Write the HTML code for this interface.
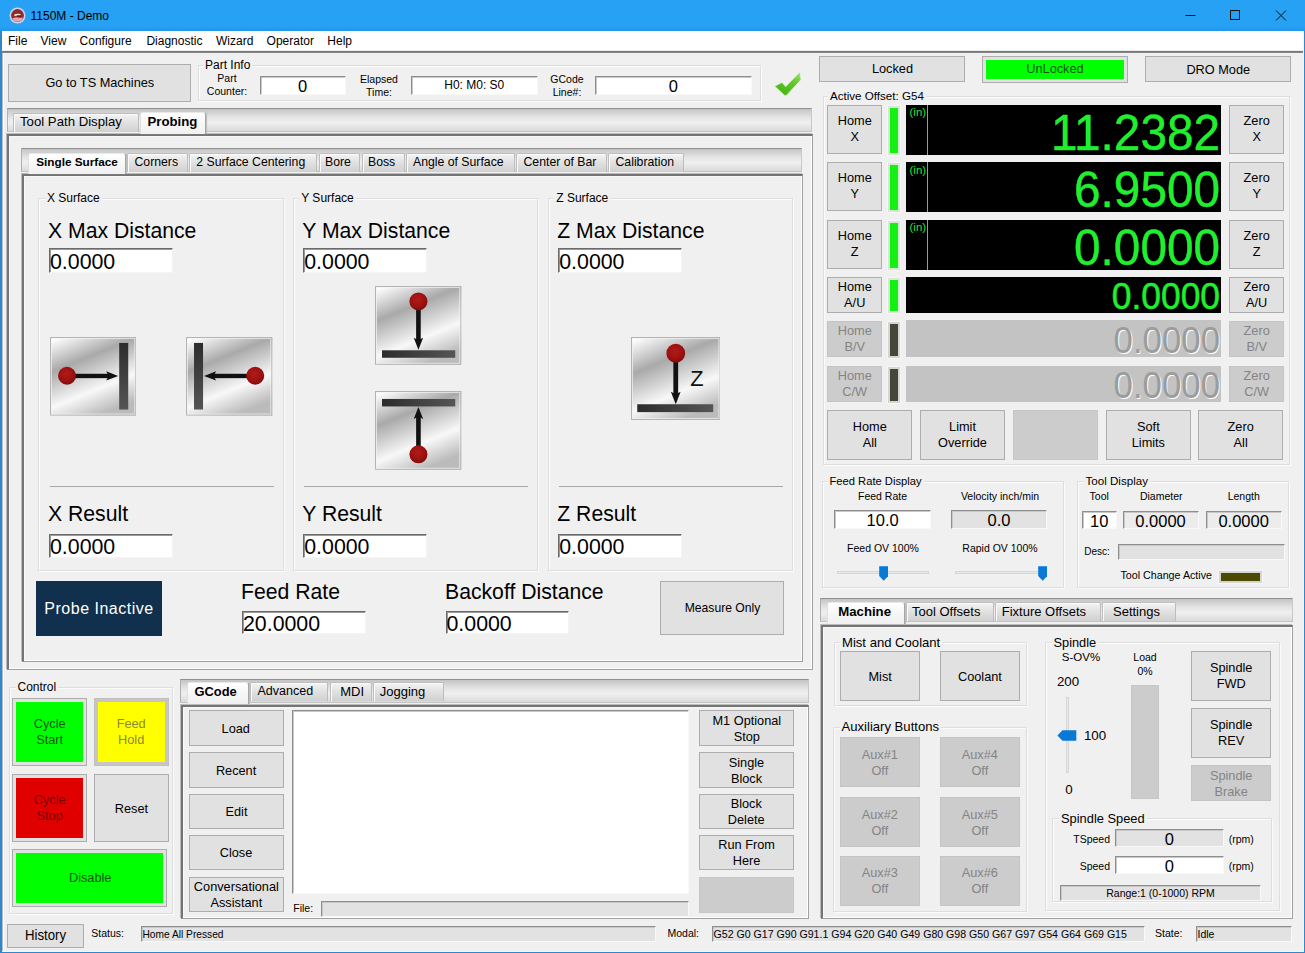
<!DOCTYPE html>
<html><head><meta charset="utf-8"><title>1150M - Demo</title><style>
html,body{margin:0;padding:0}
body{width:1305px;height:953px;overflow:hidden;position:relative;background:#f0f0f0;font-family:"Liberation Sans",sans-serif;color:#000}
.a{position:absolute;box-sizing:border-box}
.t{white-space:nowrap}
.btn{background:#e1e1e1;border:1px solid #adadad;display:flex;align-items:center;justify-content:center;text-align:center;font-size:13.3px;line-height:16px;padding-top:1px}
.btn span{display:inline-block;transform:scaleX(.958)}
.btn.np{padding-top:0}
.btn.dis{background:#cccccc;border-color:#c4c4c4;color:#848484}
.blank{background:#cccccc;border:1px solid #c6c6c6}
.cb{padding:3px;background:#e1e1e1}
.cb .ci{width:100%;height:100%;display:flex;align-items:center;justify-content:center;text-align:center}
.cb.fh{background:#c6c6c6;border-color:#c0c0c0}
.grp{border:1px solid #dedede;box-shadow:1px 1px 0 #fbfbfb, inset 1px 1px 0 #fbfbfb}
.gl{background:#f0f0f0;padding:0 2px;white-space:nowrap}
.inp{background:#fff;border:1px solid;border-color:#8e8e8e #f8f8f8 #f8f8f8 #8e8e8e;box-shadow:inset 1px 1px 0 #c8c8c8;white-space:nowrap;overflow:hidden;display:flex;align-items:center}
.inp.c{justify-content:center}
.inp.gray{background:#e2e2e2}
.inp.lite{background:#ececec}
.inp.st{font-size:10.5px;padding-left:1px}
.inp.n17{font-size:16.5px;padding-top:2.5px}
.inp.big{font-size:21.33px;padding-left:0;padding-top:4px;border-color:#6a6a6a #f4f4f4 #f4f4f4 #6a6a6a;box-shadow:inset 1px 1px 0 #9a9a9a}
.strip{background:linear-gradient(#c4c4c4 0%,#e2e2e2 35%,#f0f0f0 62%,#dadada 100%);border:1px solid #c8c8c8;border-top-color:#8f8f8f;border-left-color:#b0b0b0;border-bottom-color:#c4c4c4}
.panel{border:solid;border-width:2px 1px 1px 2px;border-color:#747474 #a0a0a0 #a0a0a0 #747474;background:#f0f0f0;box-shadow:-1px -1px 0 #bcbcbc, inset -1px -1px 0 #fff, inset 1px 1px 0 #f8f8f8}
.tab{background:linear-gradient(#f4f4f4,#e2e2e2 45%,#d0d0d0);border:1px solid #bdbdbd;border-bottom:none;box-shadow:inset 1px 1px 0 #fbfbfb;display:block;line-height:15.6px;white-space:nowrap;border-radius:2px 2px 0 0}
.tab.sel{background:linear-gradient(#ffffff,#f7f7f7 50%,#f0f0f0);font-weight:bold;border-color:#e8e8e8 #a6a6a6 #f0f0f0 #e0e0e0;box-shadow:1px 0 1px #bbb;border-radius:3px 3px 0 0}
.probe{background:#10304e;color:#fff;font-size:16px;display:flex;align-items:center;justify-content:center;letter-spacing:.5px;padding-top:2px}
.drot{transform:scaleX(.962);transform-origin:100% 50%}
.led{border:1px solid #d8d8d8;box-shadow:0 0 0 1px #f6f6f6}
.led.on{background:#14f014;border:2px solid #d4e8d4}
.led.off{background:#474739;border:2px solid #d6d6d0}
.dro{background:#000}
.drooff{background:#c3c3c3}
.track{background:#e7eaea;border:1px solid #d6d6d6}
</style></head><body>
<div class="a " style="left:0px;top:0px;width:1305px;height:953px;background:#2f87cf;"></div>
<div class="a " style="left:2px;top:31px;width:1302px;height:921px;background:#f0f0f0;"></div>
<div class="a " style="left:2px;top:53px;width:1px;height:898px;background:#b4bcc4;"></div>
<div class="a " style="left:3px;top:53px;width:1px;height:898px;background:#fafafa;"></div>
<div class="a " style="left:1303px;top:31px;width:1px;height:921px;background:#ecfbff;"></div>
<div class="a " style="left:2px;top:951px;width:1302px;height:1px;background:#ecfbff;"></div>
<div class="a " style="left:0px;top:0px;width:1305px;height:31px;background:linear-gradient(#27a1f4 0,#27a1f4 84%,#2295ea 100%);"></div>
<svg class="a" style="left:8.5px;top:6.7px" width="17" height="17" viewBox="0 0 17 17"><circle cx="8.5" cy="8.5" r="8" fill="#cdd3ea"/><circle cx="8.5" cy="8.5" r="6.4" fill="#8c2c2c"/><path d="M3 11.5 Q8.5 9.5 14 10.8 Q12.5 14.6 8.5 14.8 Q4.5 14.6 3 11.5Z" fill="#e3a6ae"/><path d="M5.2 7.6 Q8 6.2 11.6 7 L11.4 8.6 Q8.4 8 5.6 9.2Z" fill="#f3e4dc"/><path d="M7.6 8.6 L11.2 8.2 L12.6 10.6 L9 10.4Z" fill="#6e1c1c"/></svg>
<div class="a t " style="left:30.5px;top:8.5px;width:300px;height:14px;line-height:14px;font-size:12px;text-align:left;color:#000;">1150M - Demo</div>
<svg class="a" style="left:1170px;top:0" width="135" height="31" viewBox="0 0 135 31"><g stroke="#111" stroke-width="1" fill="none"><path d="M15.5 15.5h10"/><rect x="60.5" y="10.5" width="9" height="9"/><path d="M106 10.5l10 10M116 10.5l-10 10"/></g></svg>
<div class="a " style="left:2px;top:31px;width:1301px;height:20px;background:#fff;"></div>
<div class="a t " style="left:8px;top:33.5px;width:300px;height:14px;line-height:14px;font-size:12px;text-align:left;">File</div>
<div class="a t " style="left:40.5px;top:33.5px;width:300px;height:14px;line-height:14px;font-size:12px;text-align:left;">View</div>
<div class="a t " style="left:79.6px;top:33.5px;width:300px;height:14px;line-height:14px;font-size:12px;text-align:left;">Configure</div>
<div class="a t " style="left:146.4px;top:33.5px;width:300px;height:14px;line-height:14px;font-size:12px;text-align:left;">Diagnostic</div>
<div class="a t " style="left:216px;top:33.5px;width:300px;height:14px;line-height:14px;font-size:12px;text-align:left;">Wizard</div>
<div class="a t " style="left:266.6px;top:33.5px;width:300px;height:14px;line-height:14px;font-size:12px;text-align:left;">Operator</div>
<div class="a t " style="left:327.3px;top:33.5px;width:300px;height:14px;line-height:14px;font-size:12px;text-align:left;">Help</div>
<div class="a " style="left:2px;top:50px;width:1301px;height:1px;background:#efefef;"></div>
<div class="a " style="left:2px;top:51px;width:1300.5px;height:2px;background:linear-gradient(#6c6c6c,#8f8f8f);"></div>
<div class="a btn " style="left:8px;top:63.6px;width:183px;height:38px;"><span>Go to TS Machines</span></div>
<div class="a grp " style="left:197.5px;top:65px;width:563.5px;height:35.5px;"></div>
<div class="a t gl" style="left:203px;top:58px;height:14px;line-height:14px;font-size:12px;">Part Info</div>
<div class="a t " style="left:197px;top:72.25px;width:60px;height:13px;line-height:13px;font-size:10.5px;text-align:center;">Part</div>
<div class="a t " style="left:197px;top:85.25px;width:60px;height:13px;line-height:13px;font-size:10.5px;text-align:center;">Counter:</div>
<div class="a inp c n17" style="left:259.5px;top:76px;width:86px;height:18.5px;">0</div>
<div class="a t " style="left:349px;top:72.5px;width:60px;height:13px;line-height:13px;font-size:10.5px;text-align:center;">Elapsed</div>
<div class="a t " style="left:349px;top:85.5px;width:60px;height:13px;line-height:13px;font-size:10.5px;text-align:center;">Time:</div>
<div class="a inp c" style="left:410.5px;top:76px;width:127.5px;height:18.5px;font-size:12px;">H0: M0: S0</div>
<div class="a t " style="left:537px;top:72.5px;width:60px;height:13px;line-height:13px;font-size:10.5px;text-align:center;">GCode</div>
<div class="a t " style="left:537px;top:85.5px;width:60px;height:13px;line-height:13px;font-size:10.5px;text-align:center;">Line#:</div>
<div class="a inp c n17" style="left:594.75px;top:76px;width:157.25px;height:18.5px;">0</div>
<svg class="a" style="left:770px;top:68px" width="36" height="32" viewBox="0 0 36 32"><defs><linearGradient id="ck" x1="0.9" y1="0" x2="0.3" y2="1"><stop offset="0" stop-color="#9be069"/><stop offset="0.45" stop-color="#62c42c"/><stop offset="1" stop-color="#4ab415"/></linearGradient></defs><path d="M4.7 18.2 L11.9 14.4 L15.8 18.6 L29.8 4 L31 11.8 L16.4 27.4 L14.6 27.4 Z" fill="url(#ck)" stroke="#dff3cf" stroke-width="0.8" stroke-linejoin="round"/></svg>
<div class="a strip" style="left:7px;top:108px;width:805px;height:24px;"></div>
<div class="a panel" style="left:7px;top:134px;width:805.5px;height:536px;"></div>
<div class="a tab " style="left:12.5px;top:112.5px;width:126px;height:19px;font-size:13.2px;padding-left:6.5px;padding-top:0px;"><span>Tool Path Display</span></div>
<div class="a tab sel" style="left:140px;top:112px;width:65.5px;height:21.5px;font-size:13.2px;padding-left:6.5px;padding-top:1px;"><span>Probing</span></div>
<div class="a strip" style="left:21px;top:148px;width:781px;height:24px;"></div>
<div class="a panel" style="left:22px;top:174px;width:781px;height:488px;"></div>
<div class="a tab sel" style="left:28px;top:153px;width:98px;height:20.5px;font-size:11.75px;padding-left:7.25px;padding-top:0px;"><span>Single Surface</span></div>
<div class="a tab " style="left:127px;top:153px;width:60.5px;height:18.5px;font-size:12.25px;padding-left:6.5px;padding-top:1px;"><span>Corners</span></div>
<div class="a tab " style="left:189px;top:153px;width:128px;height:18.5px;font-size:12.25px;padding-left:6.25px;padding-top:1px;"><span>2 Surface Centering</span></div>
<div class="a tab " style="left:318.5px;top:153px;width:41.5px;height:18.5px;font-size:12.25px;padding-left:5.5px;padding-top:1px;"><span>Bore</span></div>
<div class="a tab " style="left:361.5px;top:153px;width:43.5px;height:18.5px;font-size:12.25px;padding-left:5.5px;padding-top:1px;"><span>Boss</span></div>
<div class="a tab " style="left:406px;top:153px;width:109px;height:18.5px;font-size:12.25px;padding-left:6px;padding-top:1px;"><span>Angle of Surface</span></div>
<div class="a tab " style="left:516px;top:153px;width:90.5px;height:18.5px;font-size:12.25px;padding-left:6.5px;padding-top:1px;"><span>Center of Bar</span></div>
<div class="a tab " style="left:608px;top:153px;width:76px;height:18.5px;font-size:12.25px;padding-left:6.5px;padding-top:1px;"><span>Calibration</span></div>
<div class="a grp " style="left:38.25px;top:198px;width:245.75px;height:372.5px;"></div>
<div class="a t gl" style="left:45px;top:191px;height:14px;line-height:14px;font-size:12px;">X Surface</div>
<div class="a t " style="left:48px;top:217.55px;width:300px;height:25px;line-height:25px;font-size:21.2px;text-align:left;">X Max Distance</div>
<div class="a inp big" style="left:49px;top:248.4px;width:123.5px;height:24.2px;">0.0000</div>
<div class="a " style="left:50px;top:486px;width:223.75px;height:1px;background:#a8a8a8;"></div>
<div class="a t " style="left:48px;top:500.95px;width:300px;height:25px;line-height:25px;font-size:21.2px;text-align:left;">X Result</div>
<div class="a inp big" style="left:49px;top:533.6px;width:123.5px;height:24px;">0.0000</div>
<div class="a grp " style="left:292.5px;top:198px;width:245.75px;height:372.5px;"></div>
<div class="a t gl" style="left:299.25px;top:191px;height:14px;line-height:14px;font-size:12px;">Y Surface</div>
<div class="a t " style="left:302.25px;top:217.55px;width:300px;height:25px;line-height:25px;font-size:21.2px;text-align:left;">Y Max Distance</div>
<div class="a inp big" style="left:303.25px;top:248.4px;width:123.5px;height:24.2px;">0.0000</div>
<div class="a " style="left:304.25px;top:486px;width:223.75px;height:1px;background:#a8a8a8;"></div>
<div class="a t " style="left:302.25px;top:500.95px;width:300px;height:25px;line-height:25px;font-size:21.2px;text-align:left;">Y Result</div>
<div class="a inp big" style="left:303.25px;top:533.6px;width:123.5px;height:24px;">0.0000</div>
<div class="a grp " style="left:547.5px;top:198px;width:245.75px;height:372.5px;"></div>
<div class="a t gl" style="left:554.25px;top:191px;height:14px;line-height:14px;font-size:12px;">Z Surface</div>
<div class="a t " style="left:557.25px;top:217.55px;width:300px;height:25px;line-height:25px;font-size:21.2px;text-align:left;">Z Max Distance</div>
<div class="a inp big" style="left:558.25px;top:248.4px;width:123.5px;height:24.2px;">0.0000</div>
<div class="a " style="left:559.25px;top:486px;width:223.75px;height:1px;background:#a8a8a8;"></div>
<div class="a t " style="left:557.25px;top:500.95px;width:300px;height:25px;line-height:25px;font-size:21.2px;text-align:left;">Z Result</div>
<div class="a inp big" style="left:558.25px;top:533.6px;width:123.5px;height:24px;">0.0000</div>
<svg class="a" width="0" height="0" style="left:0;top:0"><defs><linearGradient id="metal" x1="0.1" y1="0" x2="0.55" y2="1"><stop offset="0" stop-color="#ffffff"/><stop offset="0.34" stop-color="#a9a9a9"/><stop offset="0.72" stop-color="#f8f8f8"/><stop offset="1" stop-color="#bbbbbb"/></linearGradient><linearGradient id="barv" x1="0" y1="0" x2="0" y2="1"><stop offset="0" stop-color="#2c2c2c"/><stop offset="1" stop-color="#555"/></linearGradient><linearGradient id="barh" x1="0" y1="0" x2="1" y2="0"><stop offset="0" stop-color="#2c2c2c"/><stop offset="1" stop-color="#555"/></linearGradient><radialGradient id="ball" cx="0.45" cy="0.4" r="0.6"><stop offset="0" stop-color="#b01c18"/><stop offset="0.7" stop-color="#9c1010"/><stop offset="1" stop-color="#7c0c0c"/></radialGradient></defs></svg>
<svg class="a" style="left:50px;top:337.25px" width="86.25" height="78.5" viewBox="0 0 86 79" preserveAspectRatio="none"><rect x="0" y="0" width="86" height="79" fill="url(#metal)"/><rect x="0.5" y="0.5" width="85" height="78" fill="none" stroke="#b4b4b4"/><rect x="1.5" y="1.5" width="83" height="76" fill="none" stroke="#f4f4f4" stroke-opacity=".7"/><rect x="69" y="6" width="9" height="67" fill="url(#barv)"/><rect x="22" y="37" width="38" height="4.4" fill="#111"/><path d="M56 34.5 L68 39.2 L56 43.9 L58.5 39.2Z" fill="#111"/><circle cx="17" cy="39" r="9" fill="url(#ball)"/></svg>
<svg class="a" style="left:186.25px;top:337.25px" width="86.25" height="78.5" viewBox="0 0 86 79" preserveAspectRatio="none"><rect x="0" y="0" width="86" height="79" fill="url(#metal)"/><rect x="0.5" y="0.5" width="85" height="78" fill="none" stroke="#b4b4b4"/><rect x="1.5" y="1.5" width="83" height="76" fill="none" stroke="#f4f4f4" stroke-opacity=".7"/><rect x="8" y="6" width="9" height="67" fill="url(#barv)"/><rect x="26" y="37" width="38" height="4.4" fill="#111"/><path d="M30 34.5 L18 39.2 L30 43.9 L27.5 39.2Z" fill="#111"/><circle cx="69" cy="39" r="9" fill="url(#ball)"/></svg>
<svg class="a" style="left:375.25px;top:286px" width="86.25" height="78.75" viewBox="0 0 86 79" preserveAspectRatio="none"><rect x="0" y="0" width="86" height="79" fill="url(#metal)"/><rect x="0.5" y="0.5" width="85" height="78" fill="none" stroke="#b4b4b4"/><rect x="1.5" y="1.5" width="83" height="76" fill="none" stroke="#f4f4f4" stroke-opacity=".7"/><rect x="7" y="64.5" width="73" height="7.5" fill="url(#barh)"/><rect x="41" y="20" width="4.6" height="36" fill="#111"/><path d="M38.6 52 L43.3 64 L48 52 L43.3 54.5Z" fill="#111"/><circle cx="43.3" cy="15.5" r="9" fill="url(#ball)"/></svg>
<svg class="a" style="left:375.25px;top:391.25px" width="86.25" height="78.75" viewBox="0 0 86 79" preserveAspectRatio="none"><rect x="0" y="0" width="86" height="79" fill="url(#metal)"/><rect x="0.5" y="0.5" width="85" height="78" fill="none" stroke="#b4b4b4"/><rect x="1.5" y="1.5" width="83" height="76" fill="none" stroke="#f4f4f4" stroke-opacity=".7"/><rect x="7" y="8" width="73" height="7.5" fill="url(#barh)"/><rect x="41" y="24" width="4.6" height="36" fill="#111"/><path d="M38.6 28 L43.3 16 L48 28 L43.3 25.5Z" fill="#111"/><circle cx="43.3" cy="63.5" r="9" fill="url(#ball)"/></svg>
<svg class="a" style="left:630.5px;top:337px" width="89.5" height="83" viewBox="0 0 86 79" preserveAspectRatio="none"><rect x="0" y="0" width="86" height="79" fill="url(#metal)"/><rect x="0.5" y="0.5" width="85" height="78" fill="none" stroke="#b4b4b4"/><rect x="1.5" y="1.5" width="83" height="76" fill="none" stroke="#f4f4f4" stroke-opacity=".7"/><rect x="6" y="64" width="73" height="7.5" fill="url(#barh)"/><rect x="40.7" y="20" width="4.6" height="36" fill="#111"/><path d="M38.3 52 L43 64 L47.7 52 L43 54.5Z" fill="#111"/><circle cx="43" cy="15.5" r="9" fill="url(#ball)"/><text x="57" y="47" font-family="Liberation Sans, sans-serif" font-size="21" fill="#111">Z</text></svg>
<div class="a probe" style="left:36px;top:580.5px;width:126px;height:55.5px;"><span>Probe Inactive</span></div>
<div class="a t " style="left:241px;top:578.95px;width:300px;height:25px;line-height:25px;font-size:21.2px;text-align:left;">Feed Rate</div>
<div class="a inp big" style="left:242px;top:611px;width:123.5px;height:23px;">20.0000</div>
<div class="a t " style="left:445px;top:578.95px;width:300px;height:25px;line-height:25px;font-size:21.2px;text-align:left;">Backoff Distance</div>
<div class="a inp big" style="left:445.5px;top:611px;width:123.75px;height:23px;">0.0000</div>
<div class="a btn " style="left:660px;top:581px;width:124px;height:53.5px;font-size:12.7px;"><span>Measure Only</span></div>
<div class="a grp " style="left:8.75px;top:687px;width:163.75px;height:227px;"></div>
<div class="a t gl" style="left:15.5px;top:680px;height:14px;line-height:14px;font-size:12px;">Control</div>
<div class="a btn cb " style="left:12.4px;top:698px;width:74.6px;height:67.5px;"><div class="ci" style="background:#00ff00;color:#0a5a0a"><span>Cycle<br>Start</span></div></div>
<div class="a btn cb fh" style="left:94.25px;top:698px;width:74.25px;height:68px;"><div class="ci" style="background:#ffff00;color:#8a8a3a"><span>Feed<br>Hold</span></div></div>
<div class="a btn cb " style="left:12.4px;top:774px;width:74.6px;height:68px;"><div class="ci" style="background:#e00000;color:#7a0000"><span>Cycle<br>Stop</span></div></div>
<div class="a btn " style="left:94.25px;top:774px;width:74.25px;height:68px;"><span>Reset</span></div>
<div class="a btn cb " style="left:12.4px;top:849px;width:154.6px;height:58px;"><div class="ci" style="background:#00ff00;color:#0a5a0a"><span>Disable</span></div></div>
<div class="a strip" style="left:180px;top:679px;width:629px;height:23.5px;"></div>
<div class="a panel" style="left:181px;top:704.5px;width:627.5px;height:214.5px;"></div>
<div class="a tab sel" style="left:187px;top:682.4px;width:62.25px;height:21.6px;font-size:12.9px;padding-left:6.5px;padding-top:0.5px;"><span>GCode</span></div>
<div class="a tab " style="left:250px;top:682.4px;width:78px;height:19.1px;font-size:12.5px;padding-left:6.5px;padding-top:1px;"><span>Advanced</span></div>
<div class="a tab " style="left:329.5px;top:682.4px;width:42.5px;height:19.1px;font-size:13px;padding-left:9.75px;padding-top:1px;"><span>MDI</span></div>
<div class="a tab " style="left:373px;top:682.4px;width:70.5px;height:19.1px;font-size:13px;padding-left:5.75px;padding-top:1px;"><span>Jogging</span></div>
<div class="a btn " style="left:188.75px;top:710px;width:94.85px;height:36px;"><span>Load</span></div>
<div class="a btn " style="left:188.75px;top:752px;width:94.85px;height:36px;"><span>Recent</span></div>
<div class="a btn " style="left:188.75px;top:794px;width:94.85px;height:35px;"><span>Edit</span></div>
<div class="a btn " style="left:188.75px;top:835px;width:94.85px;height:35px;"><span>Close</span></div>
<div class="a btn " style="left:188.75px;top:877px;width:94.85px;height:35px;"><span>Conversational<br>Assistant</span></div>
<div class="a btn " style="left:699px;top:710px;width:94.75px;height:36px;"><span>M1 Optional<br>Stop</span></div>
<div class="a btn " style="left:699px;top:752px;width:94.75px;height:36px;"><span>Single<br>Block</span></div>
<div class="a btn " style="left:699px;top:794px;width:94.75px;height:35px;"><span>Block<br>Delete</span></div>
<div class="a btn " style="left:699px;top:835px;width:94.75px;height:35px;"><span>Run From<br>Here</span></div>
<div class="a blank" style="left:699px;top:876.5px;width:94.75px;height:36.5px;"></div>
<div class="a inp " style="left:292px;top:710px;width:396.5px;height:184px;background:#fff;"></div>
<div class="a t " style="left:293.25px;top:901.5px;width:300px;height:13px;line-height:13px;font-size:10.5px;text-align:left;">File:</div>
<div class="a inp gray" style="left:321.25px;top:900.75px;width:367.25px;height:15.75px;"></div>
<div class="a btn " style="left:7px;top:924.4px;width:76.5px;height:23.2px;font-size:13.8px;"><span>History</span></div>
<div class="a t " style="left:91.25px;top:927.25px;width:300px;height:13px;line-height:13px;font-size:10.5px;text-align:left;">Status:</div>
<div class="a inp gray st" style="left:140.5px;top:926px;width:515.5px;height:16.4px;font-size:10.2px;">Home All Pressed</div>
<div class="a t " style="left:667.5px;top:927.25px;width:300px;height:13px;line-height:13px;font-size:10.5px;text-align:left;">Modal:</div>
<div class="a inp gray st" style="left:711.5px;top:926px;width:433px;height:16.4px;font-size:10.6px;">G52 G0 G17 G90 G91.1 G94 G20 G40 G49 G80 G98 G50 G67 G97 G54 G64 G69 G15</div>
<div class="a t " style="left:1155px;top:927.25px;width:300px;height:13px;line-height:13px;font-size:10.5px;text-align:left;">State:</div>
<div class="a inp gray st" style="left:1195.5px;top:926px;width:96px;height:16.4px;">Idle</div>
<div class="a btn " style="left:819px;top:56px;width:146px;height:25.5px;"><span>Locked</span></div>
<div class="a btn cb" style="left:982px;top:56px;width:145.5px;height:26.5px;"><div class="ci" style="background:#00ff00;color:#0a5a0a;"><span>UnLocked</span></div></div>
<div class="a btn " style="left:1145px;top:56px;width:146px;height:26px;"><span>DRO Mode</span></div>
<div class="a grp " style="left:822.5px;top:95.5px;width:467.5px;height:369.5px;"></div>
<div class="a t gl" style="left:828px;top:88.5px;height:14px;line-height:14px;font-size:11.6px;">Active Offset: G54</div>
<div class="a btn np" style="left:827px;top:105px;width:55px;height:48.75px;"><span>Home<br>X</span></div>
<div class="a btn np" style="left:1229px;top:105px;width:55px;height:48.75px;"><span>Zero<br>X</span></div>
<div class="a led on" style="left:888px;top:106px;width:12px;height:48.5px;"></div>
<div class="a dro" style="left:906px;top:104.5px;width:314.6px;height:50.5px;"></div>
<div class="a " style="left:906px;top:104.5px;width:21.5px;height:50.5px;border-right:1px solid #9a9a9a;"></div>
<div class="a t " style="left:909.5px;top:105px;width:300px;height:14px;line-height:14px;font-size:11.5px;text-align:left;color:#1fe03a;">(in)</div>
<div class="a t drot" style="left:919.6px;top:103.21px;width:300px;height:60px;line-height:60px;font-size:49.6px;text-align:right;color:#1ff02e;-webkit-text-stroke:0.5px #1ff02e;">11.2382</div>
<div class="a btn np" style="left:827px;top:162px;width:55px;height:48.75px;"><span>Home<br>Y</span></div>
<div class="a btn np" style="left:1229px;top:162px;width:55px;height:48.75px;"><span>Zero<br>Y</span></div>
<div class="a led on" style="left:888px;top:163px;width:12px;height:48.5px;"></div>
<div class="a dro" style="left:906px;top:162px;width:314.6px;height:50px;"></div>
<div class="a " style="left:906px;top:162px;width:21.5px;height:50px;border-right:1px solid #9a9a9a;"></div>
<div class="a t " style="left:909.5px;top:162.5px;width:300px;height:14px;line-height:14px;font-size:11.5px;text-align:left;color:#1fe03a;">(in)</div>
<div class="a t drot" style="left:919.6px;top:160.21px;width:300px;height:60px;line-height:60px;font-size:49.6px;text-align:right;color:#1ff02e;-webkit-text-stroke:0.5px #1ff02e;">6.9500</div>
<div class="a btn np" style="left:827px;top:220px;width:55px;height:48.75px;"><span>Home<br>Z</span></div>
<div class="a btn np" style="left:1229px;top:220px;width:55px;height:48.75px;"><span>Zero<br>Z</span></div>
<div class="a led on" style="left:888px;top:221px;width:12px;height:48.5px;"></div>
<div class="a dro" style="left:906px;top:219.5px;width:314.6px;height:50px;"></div>
<div class="a " style="left:906px;top:219.5px;width:21.5px;height:50px;border-right:1px solid #9a9a9a;"></div>
<div class="a t " style="left:909.5px;top:220px;width:300px;height:14px;line-height:14px;font-size:11.5px;text-align:left;color:#1fe03a;">(in)</div>
<div class="a t drot" style="left:919.6px;top:217.71px;width:300px;height:60px;line-height:60px;font-size:49.6px;text-align:right;color:#1ff02e;-webkit-text-stroke:0.5px #1ff02e;">0.0000</div>
<div class="a btn np" style="left:827px;top:277px;width:55px;height:35.5px;"><span>Home<br>A/U</span></div>
<div class="a btn np" style="left:1229px;top:277px;width:55px;height:35.5px;"><span>Zero<br>A/U</span></div>
<div class="a led on" style="left:888px;top:278px;width:12px;height:35.25px;"></div>
<div class="a dro" style="left:906px;top:276.5px;width:314.6px;height:36.5px;"></div>
<div class="a t drot" style="left:919.6px;top:275.45px;width:300px;height:44px;line-height:44px;font-size:36.8px;text-align:right;color:#1ff02e;-webkit-text-stroke:0.5px #1ff02e;">0.0000</div>
<div class="a btn np dis" style="left:827px;top:321px;width:55px;height:35.75px;"><span>Home<br>B/V</span></div>
<div class="a btn np dis" style="left:1229px;top:321px;width:55px;height:35.75px;"><span>Zero<br>B/V</span></div>
<div class="a led off" style="left:888px;top:322px;width:12px;height:35.5px;"></div>
<div class="a drooff" style="left:906px;top:320px;width:314.6px;height:36.75px;"></div>
<div class="a t drot" style="left:919.8px;top:319.31px;width:300px;height:43px;line-height:43px;font-size:36.2px;text-align:right;color:#9c9c9c;text-shadow:1px 1px 0 #fff;">0.0000</div>
<div class="a btn np dis" style="left:827px;top:366px;width:55px;height:35.75px;"><span>Home<br>C/W</span></div>
<div class="a btn np dis" style="left:1229px;top:366px;width:55px;height:35.75px;"><span>Zero<br>C/W</span></div>
<div class="a led off" style="left:888px;top:367px;width:12px;height:35.5px;"></div>
<div class="a drooff" style="left:906px;top:365.5px;width:314.6px;height:36.25px;"></div>
<div class="a t drot" style="left:919.8px;top:364.31px;width:300px;height:43px;line-height:43px;font-size:36.2px;text-align:right;color:#9c9c9c;text-shadow:1px 1px 0 #fff;">0.0000</div>
<div class="a btn " style="left:827px;top:410px;width:85px;height:49.75px;"><span>Home<br>All</span></div>
<div class="a btn " style="left:920.25px;top:410px;width:84.75px;height:49.75px;"><span>Limit<br>Override</span></div>
<div class="a blank" style="left:1013px;top:410px;width:84.5px;height:49.75px;"></div>
<div class="a btn " style="left:1106px;top:410px;width:85px;height:49.75px;"><span>Soft<br>Limits</span></div>
<div class="a btn " style="left:1198px;top:410px;width:85px;height:49.75px;"><span>Zero<br>All</span></div>
<div class="a grp " style="left:821.5px;top:481px;width:242.5px;height:107px;"></div>
<div class="a t gl" style="left:827.5px;top:474.5px;height:13px;line-height:13px;font-size:11.2px;">Feed Rate Display</div>
<div class="a t " style="left:822.5px;top:489.5px;width:120px;height:13px;line-height:13px;font-size:10.5px;text-align:center;">Feed Rate</div>
<div class="a inp c n17" style="left:834px;top:510px;width:97.25px;height:18.5px;">10.0</div>
<div class="a t " style="left:930px;top:489.5px;width:140px;height:13px;line-height:13px;font-size:10.5px;text-align:center;">Velocity inch/min</div>
<div class="a inp c gray n17" style="left:951.25px;top:510px;width:95.5px;height:18.5px;">0.0</div>
<div class="a t " style="left:813px;top:541.5px;width:140px;height:13px;line-height:13px;font-size:10.5px;text-align:center;">Feed OV 100%</div>
<div class="a t " style="left:930px;top:541.5px;width:140px;height:13px;line-height:13px;font-size:10.5px;text-align:center;">Rapid OV 100%</div>
<div class="a track" style="left:837px;top:570.75px;width:92px;height:3px;"></div>
<svg class="a" style="left:879px;top:566px" width="9.4" height="15" viewBox="0 0 9.4 15"><path d="M0.2 0.2h9v9.8L4.7 14.8 0.2 10z" fill="#0a78d6"/></svg>
<div class="a track" style="left:955px;top:570.75px;width:92px;height:3px;"></div>
<svg class="a" style="left:1037.7px;top:566px" width="9.4" height="15" viewBox="0 0 9.4 15"><path d="M0.2 0.2h9v9.8L4.7 14.8 0.2 10z" fill="#0a78d6"/></svg>
<div class="a grp " style="left:1076.75px;top:480.5px;width:211.75px;height:107.5px;"></div>
<div class="a t gl" style="left:1083.5px;top:473.5px;height:14px;line-height:14px;font-size:11.6px;">Tool Display</div>
<div class="a t " style="left:1069.25px;top:489.75px;width:60px;height:13px;line-height:13px;font-size:10.5px;text-align:center;">Tool</div>
<div class="a t " style="left:1116.25px;top:489.75px;width:90px;height:13px;line-height:13px;font-size:10.5px;text-align:center;">Diameter</div>
<div class="a t " style="left:1198.75px;top:489.75px;width:90px;height:13px;line-height:13px;font-size:10.5px;text-align:center;">Length</div>
<div class="a inp c n17" style="left:1081.75px;top:511px;width:35px;height:18px;">10</div>
<div class="a inp c lite n17" style="left:1122.5px;top:511px;width:76px;height:18px;">0.0000</div>
<div class="a inp c lite n17" style="left:1205.5px;top:511px;width:76.25px;height:18px;">0.0000</div>
<div class="a t " style="left:1084.25px;top:545.5px;width:300px;height:12px;line-height:12px;font-size:10px;text-align:left;">Desc:</div>
<div class="a inp gray" style="left:1117.5px;top:544px;width:167px;height:16px;"></div>
<div class="a t " style="left:1120.5px;top:569px;width:300px;height:13px;line-height:13px;font-size:10.7px;text-align:left;">Tool Change Active</div>
<div class="a led off" style="left:1218.5px;top:571px;width:43.5px;height:11.5px;background:#4a4a00;"></div>
<div class="a strip" style="left:820px;top:598.4px;width:473px;height:24.1px;"></div>
<div class="a panel" style="left:821px;top:625px;width:472px;height:294px;"></div>
<div class="a tab sel" style="left:827px;top:602.4px;width:77.5px;height:21.6px;font-size:13.2px;padding-left:10.25px;padding-top:0.4px;"><span>Machine</span></div>
<div class="a tab " style="left:906px;top:602.4px;width:87.5px;height:19.1px;font-size:13px;padding-left:5px;padding-top:0.8px;"><span>Tool Offsets</span></div>
<div class="a tab " style="left:995px;top:602.4px;width:105.5px;height:19.1px;font-size:13px;padding-left:5.75px;padding-top:0.8px;"><span>Fixture Offsets</span></div>
<div class="a tab " style="left:1101.75px;top:602.4px;width:74.25px;height:19.1px;font-size:13px;padding-left:10.25px;padding-top:0.8px;"><span>Settings</span></div>
<div class="a grp " style="left:834px;top:642px;width:193px;height:64px;"></div>
<div class="a t gl" style="left:840px;top:634.75px;height:16px;line-height:16px;font-size:13.1px;">Mist and Coolant</div>
<div class="a btn " style="left:840px;top:651px;width:80px;height:50px;"><span>Mist</span></div>
<div class="a btn " style="left:940.25px;top:651px;width:79.5px;height:50px;"><span>Coolant</span></div>
<div class="a grp " style="left:833px;top:726.5px;width:194px;height:185px;"></div>
<div class="a t gl" style="left:839.5px;top:718.5px;height:16px;line-height:16px;font-size:13.1px;">Auxiliary Buttons</div>
<div class="a btn dis" style="left:839.5px;top:737.25px;width:80.5px;height:49.75px;"><span>Aux#1<br>Off</span></div>
<div class="a btn dis" style="left:940px;top:737.25px;width:79.75px;height:49.75px;"><span>Aux#4<br>Off</span></div>
<div class="a btn dis" style="left:839.5px;top:797px;width:80.5px;height:50px;"><span>Aux#2<br>Off</span></div>
<div class="a btn dis" style="left:940px;top:797px;width:79.75px;height:50px;"><span>Aux#5<br>Off</span></div>
<div class="a btn dis" style="left:839.5px;top:855.75px;width:80.5px;height:50.25px;"><span>Aux#3<br>Off</span></div>
<div class="a btn dis" style="left:940px;top:855.75px;width:79.75px;height:50.25px;"><span>Aux#6<br>Off</span></div>
<div class="a grp " style="left:1044.5px;top:642.4px;width:235.5px;height:269.1px;"></div>
<div class="a t gl" style="left:1051.5px;top:634.9px;height:15px;line-height:15px;font-size:12.8px;">Spindle</div>
<div class="a t " style="left:1041px;top:650.3px;width:80px;height:14px;line-height:14px;font-size:11.5px;text-align:center;">S-OV%</div>
<div class="a t " style="left:1038px;top:673.5px;width:60px;height:16px;line-height:16px;font-size:13.33px;text-align:center;">200</div>
<div class="a t " style="left:1065px;top:727.8px;width:60px;height:16px;line-height:16px;font-size:13.33px;text-align:center;">100</div>
<div class="a t " style="left:1039px;top:781.5px;width:60px;height:16px;line-height:16px;font-size:13.33px;text-align:center;">0</div>
<div class="a track" style="left:1065.5px;top:696.8px;width:3.5px;height:75.8px;"></div>
<svg class="a" style="left:1057px;top:730px" width="20" height="11" viewBox="0 0 20 11"><path d="M19.3 0.3v10.4H5.5L0.4 5.5 5.5 0.3z" fill="#0a78d6"/></svg>
<div class="a t " style="left:1115px;top:650.5px;width:60px;height:13px;line-height:13px;font-size:10.5px;text-align:center;">Load</div>
<div class="a t " style="left:1115px;top:664.8px;width:60px;height:13px;line-height:13px;font-size:10.5px;text-align:center;">0%</div>
<div class="a blank" style="left:1131px;top:685.4px;width:28px;height:113.6px;"></div>
<div class="a btn " style="left:1191px;top:651px;width:80px;height:49.8px;"><span>Spindle<br>FWD</span></div>
<div class="a btn " style="left:1191px;top:708px;width:80px;height:49.6px;"><span>Spindle<br>REV</span></div>
<div class="a btn dis" style="left:1191px;top:765px;width:80px;height:36px;"><span>Spindle<br>Brake</span></div>
<div class="a grp " style="left:1052px;top:817.75px;width:219.5px;height:84.25px;"></div>
<div class="a t gl" style="left:1059px;top:811.25px;height:15px;line-height:15px;font-size:12.87px;">Spindle Speed</div>
<div class="a t " style="left:1030px;top:832.5px;width:80px;height:13px;line-height:13px;font-size:10.5px;text-align:right;">TSpeed</div>
<div class="a inp c gray n17" style="left:1114.75px;top:829px;width:109.25px;height:17.5px;">0</div>
<div class="a t " style="left:1228.75px;top:832.5px;width:300px;height:13px;line-height:13px;font-size:10.5px;text-align:left;">(rpm)</div>
<div class="a t " style="left:1030px;top:859.5px;width:80px;height:13px;line-height:13px;font-size:10.5px;text-align:right;">Speed</div>
<div class="a inp c n17" style="left:1114.75px;top:856px;width:109.25px;height:18px;">0</div>
<div class="a t " style="left:1228.75px;top:859.5px;width:300px;height:13px;line-height:13px;font-size:10.5px;text-align:left;">(rpm)</div>
<div class="a inp c gray" style="left:1060px;top:885px;width:201px;height:15.5px;font-size:10.5px;">Range:1 (0-1000) RPM</div>
</body></html>
